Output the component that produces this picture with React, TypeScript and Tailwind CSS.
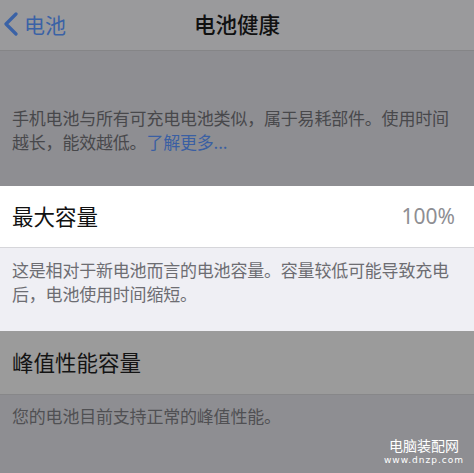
import React from 'react';

const FONT = "font-['Noto_Sans_CJK_SC','Noto_Sans',sans-serif]";

function BackChevron() {
  return (
    <svg width="16" height="24" viewBox="0 0 16 24" fill="none">
      <path d="M13 2 L3 12 L13 22" stroke="#3a62a6" strokeWidth="3.2" strokeLinecap="round" strokeLinejoin="round" />
    </svg>
  );
}

export default function App() {
  return (
    <div className={`w-[474px] h-[473px] overflow-hidden bg-[#8e8e92] relative ${FONT}`}>
      {/* Nav bar */}
      <div className="h-[51px] bg-[#9a9a9c] border-b border-[#858587] relative flex items-center">
        <div className="flex items-center pl-[3px] gap-[5px] pb-[2px]">
          <BackChevron />
          <span className="text-[21px] leading-none text-[#3a62a6]">电池</span>
        </div>
        <div className="absolute inset-x-0 top-0 h-[48px] flex items-center justify-center">
          <span className="text-[21.5px] font-medium text-[#111] leading-none">电池健康</span>
        </div>
      </div>

      {/* Intro paragraph */}
      <div className="h-[135px] px-[12px] pt-[55px]">
        <p className="text-[17px] leading-[24px] text-[#48484b] tracking-[-0.2px]">
          手机电池与所有可充电电池类似，属于易耗部件。使用时间越长，能效越低。
          <span className="text-[#3a5fa3]">了解更多...</span>
        </p>
      </div>

      {/* Maximum capacity */}
      <div className="h-[62px] bg-white border-b border-[#d6d6da] flex items-center justify-between pl-[12px] pr-[19px]">
        <span className="text-[21.5px] text-[#111]">最大容量</span>
        <span className="text-[21px] text-[#8e8e93] font-['Noto_Sans',sans-serif]">100%</span>
      </div>
      <div className="h-[83px] bg-[#efeff4] px-[12px] pt-[10px]">
        <p className="text-[17px] leading-[24px] text-[#6d6d72] tracking-[-0.2px]">
          这是相对于新电池而言的电池容量。容量较低可能导致充电后，电池使用时间缩短。
        </p>
      </div>

      {/* Peak performance */}
      <div className="h-[64px] bg-[#9b9b9b] border-b border-[#878789] flex items-center pl-[12px]">
        <span className="text-[21.5px] text-[#141414]">峰值性能容量</span>
      </div>
      <div className="px-[12px] pt-[9px]">
        <p className="text-[17px] leading-[24px] text-[#505053] tracking-[-0.2px]">
          您的电池目前支持正常的峰值性能。
        </p>
      </div>

      {/* Watermark */}
      <div className="absolute right-[10px] bottom-[6px] flex flex-col items-center text-white">
        <span className="text-[14px] leading-[16px] tracking-[0px]">电脑装配网</span>
        <span className="text-[9px] leading-[14px] tracking-[1px] font-['DejaVu_Sans',sans-serif]">www.dnzp.com</span>
      </div>
    </div>
  );
}
